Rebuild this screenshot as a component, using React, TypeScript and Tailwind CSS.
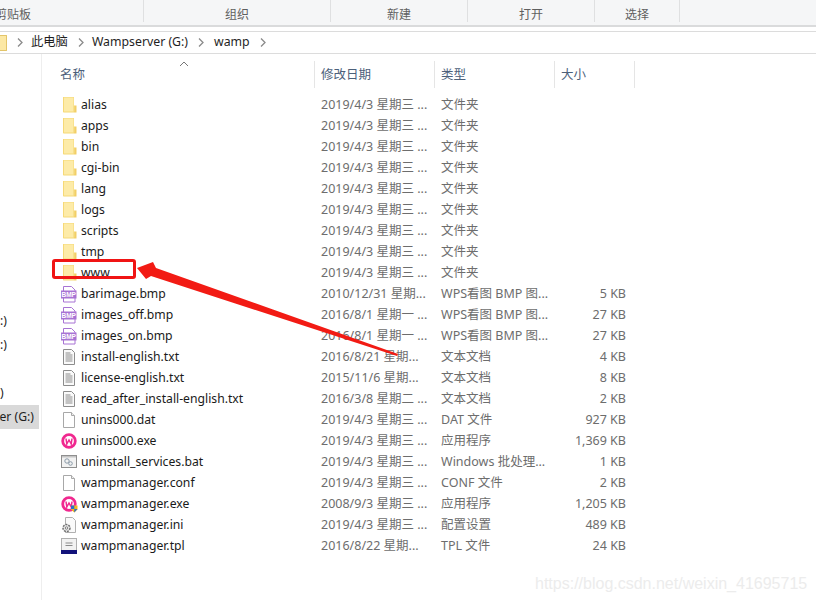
const font = "[font-family:'Noto_Sans','Noto_Sans_CJK_SC',sans-serif]";

type Row = { name: string; date: string; type: string; size?: string; icon: string };

const folder = (name: string): Row => ({ name, date: "2019/4/3 星期三 ...", type: "文件夹", icon: "folder" });

const rows: Row[] = [
	folder("alias"),
	folder("apps"),
	folder("bin"),
	folder("cgi-bin"),
	folder("lang"),
	folder("logs"),
	folder("scripts"),
	folder("tmp"),
	folder("www"),
	{ name: "barimage.bmp", date: "2010/12/31 星期...", type: "WPS看图 BMP 图...", size: "5 KB", icon: "bmp" },
	{ name: "images_off.bmp", date: "2016/8/1 星期一 ...", type: "WPS看图 BMP 图...", size: "27 KB", icon: "bmp" },
	{ name: "images_on.bmp", date: "2016/8/1 星期一 ...", type: "WPS看图 BMP 图...", size: "27 KB", icon: "bmp" },
	{ name: "install-english.txt", date: "2016/8/21 星期...", type: "文本文档", size: "4 KB", icon: "txt" },
	{ name: "license-english.txt", date: "2015/11/6 星期...", type: "文本文档", size: "8 KB", icon: "txt" },
	{ name: "read_after_install-english.txt", date: "2016/3/8 星期二 ...", type: "文本文档", size: "2 KB", icon: "txt" },
	{ name: "unins000.dat", date: "2019/4/3 星期三 ...", type: "DAT 文件", size: "927 KB", icon: "blank" },
	{ name: "unins000.exe", date: "2019/4/3 星期三 ...", type: "应用程序", size: "1,369 KB", icon: "wamp" },
	{ name: "uninstall_services.bat", date: "2019/4/3 星期三 ...", type: "Windows 批处理...", size: "1 KB", icon: "bat" },
	{ name: "wampmanager.conf", date: "2019/4/3 星期三 ...", type: "CONF 文件", size: "2 KB", icon: "blank" },
	{ name: "wampmanager.exe", date: "2008/9/3 星期三 ...", type: "应用程序", size: "1,205 KB", icon: "wampShield" },
	{ name: "wampmanager.ini", date: "2019/4/3 星期三 ...", type: "配置设置", size: "489 KB", icon: "ini" },
	{ name: "wampmanager.tpl", date: "2016/8/22 星期...", type: "TPL 文件", size: "24 KB", icon: "tpl" },
];

function FileIcon({ kind }: { kind: string }) {
	if (kind === "folder") {
		return (
			<svg width="18" height="18" viewBox="0 0 18 18">
				<path d="M3 1h11v15.500H3.500l-.5-.5z" fill="#f6d977" />
				<path d="M4 1.500h9.500V15.500H4z" fill="#fdeba8" />
				<path d="M14 9.500h2.500v7H14z" fill="#f2cf66" />
				<path d="M13.500 10h1v5.500h-1z" fill="#f6dd88" />
			</svg>
		);
	}
	if (kind === "bmp") {
		return (
			<svg width="18" height="18" viewBox="0 0 18 18">
				<path d="M3.500 1.500h8l3.500 3.500v12h-11.500z" fill="#fff" stroke="#a873d4" />
				<rect x="1" y="5.500" width="15.500" height="8" fill="#a873d4" />
				<text x="8.750" y="12" textAnchor="middle" fontSize="6.500" fontWeight="700" fill="#fff" fontFamily="Liberation Sans">BMP</text>
			</svg>
		);
	}
	if (kind === "txt") {
		return (
			<svg width="18" height="18" viewBox="0 0 18 18">
				<path d="M3.500 1.500h8l3 3v12h-11z" fill="#fafafa" stroke="#8c8c8c" />
				<path d="M5.500 5h5M5.500 7h7M5.500 9h7M5.500 11h7M5.500 13h7" stroke="#8c8c8c" />
			</svg>
		);
	}
	if (kind === "blank") {
		return (
			<svg width="18" height="18" viewBox="0 0 18 18">
				<path d="M3.500 1.500h8l3 3v12h-11z" fill="#fff" stroke="#a8a8a8" />
				<path d="M11.500 1.500v3h3" fill="#eee" stroke="#a8a8a8" />
			</svg>
		);
	}
	if (kind === "wamp" || kind === "wampShield") {
		return (
			<svg width="18" height="18" viewBox="0 0 18 18">
				<circle cx="9" cy="9" r="6.300" fill="#fff" stroke="#f0288f" strokeWidth="2.800" />
				<path d="M6 6.500l.8 5.500 2.200-4 2.200 4 .8-5.500" fill="none" stroke="#f0288f" strokeWidth="1.500" />
				{kind === "wampShield" && (
					<>
						<path d="M11 10.500h6.500v4l-3.200 3-3.300-3z" fill="#f3b51c" />
						<path d="M11 10.500h3.300V14H11zM14.300 14h3.200l-3.200 3.500z" fill="#2a6fc9" />
					</>
				)}
			</svg>
		);
	}
	if (kind === "bat") {
		return (
			<svg width="18" height="16" viewBox="0 0 18 16">
				<rect x="1.500" y="1.500" width="15" height="12" fill="#f2f2f2" stroke="#8f8f8f" />
				<rect x="2" y="2" width="14" height="1.500" fill="#c4c4c4" />
				<circle cx="7" cy="7" r="2.200" fill="none" stroke="#8a9aa8" />
				<circle cx="10.500" cy="9.500" r="1.800" fill="none" stroke="#8a9aa8" />
			</svg>
		);
	}
	if (kind === "ini") {
		return (
			<svg width="18" height="18" viewBox="0 0 18 18">
				<path d="M5.500 1.500h7l3 3v12h-10z" fill="#fafafa" stroke="#b0b0b0" />
				<circle cx="6.500" cy="12" r="3.500" fill="#e4e4e4" stroke="#707070" strokeWidth="1.500" strokeDasharray="2 1" />
				<circle cx="6.500" cy="12" r="1.200" fill="#fff" stroke="#808080" />
			</svg>
		);
	}
	return (
		<svg width="18" height="18" viewBox="0 0 18 18">
			<rect x="1.500" y="1.500" width="15" height="15" fill="#f2f2f2" stroke="#b0b0b0" />
			<rect x="1" y="13" width="16" height="4" fill="#12127a" />
			<path d="M5.500 6h7M5.500 8.500h7" stroke="#8a8a8a" />
		</svg>
	);
}

function Chevron() {
	return (
		<svg width="6" height="9" viewBox="0 0 6 9" className="shrink-0">
			<path d="M1 0.500l4 4-4 4" fill="none" stroke="#8a8a8a" strokeWidth="1.300" />
		</svg>
	);
}

export default function App() {
	return (
		<div className={`relative h-[600px] w-[816px] overflow-hidden bg-white text-[12.500px] ${font}`}>
			{/* Ribbon group labels */}
			<div className="flex h-[27px] border-b-2 border-[#dadbdc] bg-[#f5f6f7] text-[12px] text-[#5f5f5f]">
				<div className="h-[22px] w-[144px] overflow-hidden border-r border-[#dfe0e1]">
					<div className="ml-[-5px] pt-[6px] whitespace-nowrap">剪贴板</div>
				</div>
				<div className="flex h-[22px] w-[187px] items-center justify-center border-r border-[#dfe0e1] pt-[7px]">组织</div>
				<div className="flex h-[22px] w-[137px] items-center justify-center border-r border-[#dfe0e1] pt-[7px]">新建</div>
				<div className="flex h-[22px] w-[127px] items-center justify-center border-r border-[#dfe0e1] pt-[7px]">打开</div>
				<div className="flex h-[22px] w-[85px] items-center justify-center border-r border-[#dfe0e1] pt-[7px]">选择</div>
			</div>
			{/* Address bar */}
			<div className="mt-[4px] flex h-[23px] items-center border-y border-[#dcdcdc] text-[12.300px] text-[#1f1f1f]">
				<div className="mr-[10px] h-[16px] w-[7px] rounded-r-[1px] border border-l-0 border-[#e3c56a] bg-[#fce8a4]" />
				<Chevron />
				<span className="ml-[8px]">此电脑</span>
				<span className="ml-[10px]"><Chevron /></span>
				<span className="ml-[8px]">Wampserver (G:)</span>
				<span className="ml-[10px]"><Chevron /></span>
				<span className="ml-[10px]">wamp</span>
				<span className="ml-[10px]"><Chevron /></span>
			</div>
			<div className="flex">
				{/* Navigation pane, scrolled so only the line ends show */}
				<div className="h-[546px] w-[42px] shrink-0 border-r border-[#eeeeee] pt-[255px] text-[12.200px] text-[#1f1f1f]">
					<div className="flex h-[24px] items-center">:)</div>
					<div className="flex h-[24px] items-center">:)</div>
					<div className="h-[24px]" />
					<div className="flex h-[24px] items-center">)</div>
					<div className="flex h-[24px] w-[39px] items-center justify-end overflow-hidden whitespace-nowrap bg-[#d9d9d9] pr-[5px]">er (G:)</div>
				</div>
				<div className="min-w-0 flex-1">
					{/* Column headers */}
					<div className="mt-[7px] flex h-[27px] text-[#4c607a]">
						<div className="relative h-full w-[273px] border-r border-[#e5e5e5] pt-[5px] pl-[18px]">
							名称
							<svg width="10" height="6" viewBox="0 0 10 6" className="absolute top-0 right-[125px]">
								<path d="M1 5l4-4 4 4" fill="none" stroke="#777" />
							</svg>
						</div>
						<div className="h-full w-[120px] border-r border-[#e5e5e5] pt-[5px] pl-[6px]">修改日期</div>
						<div className="h-full w-[120px] border-r border-[#e5e5e5] pt-[5px] pl-[6px]">类型</div>
						<div className="h-full w-[80px] border-r border-[#e5e5e5] pt-[5px] pl-[6px]">大小</div>
					</div>
					{/* File rows */}
					<div className="mt-[7px]">
						{rows.map((row) => (
							<div key={row.name} className="flex h-[21px] items-center whitespace-nowrap">
								<div className="flex w-[272px] items-center">
									<div className="flex w-[37px] shrink-0 justify-end pr-[1px]">
										<FileIcon kind={row.icon} />
									</div>
									<span className="ml-[2px] text-[12.200px] text-[#1a1a1a]">{row.name}</span>
								</div>
								<div className="w-[120px] pl-[7px] text-[#6d6d6d]">{row.date}</div>
								<div className="w-[120px] pl-[7px] text-[#6d6d6d]">{row.type}</div>
								<div className="w-[72px] text-right text-[#6d6d6d]">{row.size}</div>
							</div>
						))}
					</div>
				</div>
			</div>
			{/* Red annotation drawn over the screenshot */}
			<div className="absolute top-[259px] left-[52px] h-[20px] w-[84px] rounded-[3px] border-[3px] border-[#f01414]" />
			<svg width="816" height="600" className="pointer-events-none absolute top-0 left-0">
				<path d="M137 268L153 262L156 268L398 354L397 356L151 276L146 279Z" fill="#f21b14" />
			</svg>
			<div className="absolute top-[572px] left-[535px] font-['Liberation_Sans'] text-[16px] text-[#ececec]">
				https://blog.csdn.net/weixin_41695715
			</div>
		</div>
	);
}
